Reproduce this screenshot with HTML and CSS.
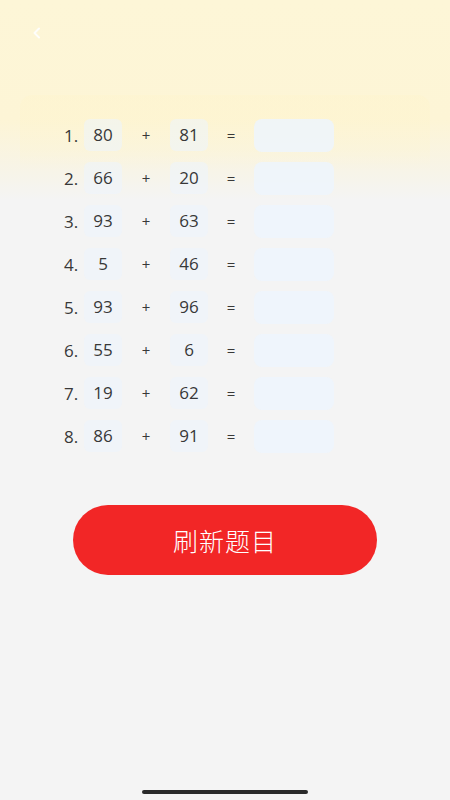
FILE: index.html
```html
<!DOCTYPE html>
<html lang="zh">
<head>
<meta charset="utf-8">
<title>加法练习</title>
<link rel="stylesheet" href="styles.css">
</head>
<body>
<div class="page">
  <div class="header">
    <svg class="back" width="10" height="12" viewBox="0 0 10 12"><path d="M7 1.5 L2.5 6 L7 10.5" fill="none" stroke="#ffffff" stroke-width="2" stroke-linecap="round" stroke-linejoin="round"/></svg>
  </div>
  <div class="card">
    <div class="list">
      <div class="row"><span class="idx">1.</span><span class="num">80</span><span class="op">+</span><span class="num">81</span><span class="op">=</span><span class="ans"></span></div>
      <div class="row"><span class="idx">2.</span><span class="num">66</span><span class="op">+</span><span class="num">20</span><span class="op">=</span><span class="ans"></span></div>
      <div class="row"><span class="idx">3.</span><span class="num">93</span><span class="op">+</span><span class="num">63</span><span class="op">=</span><span class="ans"></span></div>
      <div class="row"><span class="idx">4.</span><span class="num">5</span><span class="op">+</span><span class="num">46</span><span class="op">=</span><span class="ans"></span></div>
      <div class="row"><span class="idx">5.</span><span class="num">93</span><span class="op">+</span><span class="num">96</span><span class="op">=</span><span class="ans"></span></div>
      <div class="row"><span class="idx">6.</span><span class="num">55</span><span class="op">+</span><span class="num">6</span><span class="op">=</span><span class="ans"></span></div>
      <div class="row"><span class="idx">7.</span><span class="num">19</span><span class="op">+</span><span class="num">62</span><span class="op">=</span><span class="ans"></span></div>
      <div class="row"><span class="idx">8.</span><span class="num">86</span><span class="op">+</span><span class="num">91</span><span class="op">=</span><span class="ans"></span></div>
    </div>
  </div>
  <div class="actions">
    <button class="refresh">刷新题目</button>
  </div>
  <div class="home-indicator"></div>
</div>
</body>
</html>
```
FILE: styles.css
```css
html, body {
  margin: 0;
  padding: 0;
}
body {
  background: #f4f4f4;
  font-family: "Open Sans", "Noto Sans", "Noto Sans CJK SC", sans-serif;
  color: #333333;
}
.page {
  width: 450px;
  height: 800px;
  position: relative;
  background: linear-gradient(180deg, #fdf6d7 0px, #fdf5d6 120px, #f7f4e8 172px, #f4f4f4 200px, #f4f4f4 100%);
  display: flex;
  flex-direction: column;
  overflow: hidden;
}
.header {
  height: 95px;
  padding: 27px 0 0 32px;
  box-sizing: border-box;
}
.back {
  display: block;
  opacity: 0.9;
}
.card {
  margin: 0 20px;
  padding: 23px 0 0 45px;
  border-radius: 12px;
  background: linear-gradient(180deg, rgba(255, 244, 200, 0.3) 0px, rgba(255, 244, 200, 0.2) 55px, rgba(255, 244, 200, 0) 75px);
}
.list {
  display: flex;
  flex-direction: column;
  gap: 9px;
}
.row {
  display: grid;
  grid-template-columns: 19px 38px 48px 38px 46px 80px;
  align-items: center;
  height: 34px;
  font-size: 17px;
  color: #383838;
}
.idx {
  text-align: left;
  white-space: nowrap;
  margin-left: -1px;
}
.num {
  height: 32px;
  line-height: 32px;
  text-align: center;
  background: rgba(236, 244, 253, 0.55);
  border-radius: 6px;
}
.op {
  text-align: center;
  font-size: 15px;
}
.ans {
  height: 33px;
  background: rgba(237, 245, 253, 0.85);
  border-radius: 8px;
}
.actions {
  display: flex;
  justify-content: center;
  padding-top: 52px;
}
.refresh {
  width: 304px;
  height: 70px;
  border: none;
  border-radius: 35px;
  background: #f22626;
  color: #ffffff;
  font-family: "Noto Sans CJK SC", sans-serif;
  font-weight: 300;
  font-size: 25px;
  letter-spacing: 1px;
  padding: 0;
}
.home-indicator {
  position: absolute;
  left: 142px;
  bottom: 6px;
  width: 166px;
  height: 4px;
  border-radius: 2px;
  background: #2a2a2a;
}
```
